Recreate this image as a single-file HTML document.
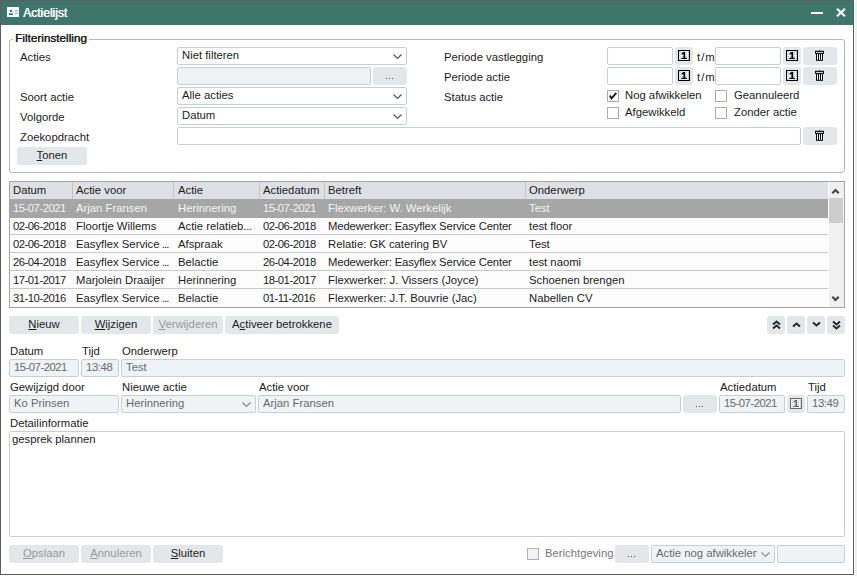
<!DOCTYPE html>
<html><head><meta charset="utf-8">
<style>
*{margin:0;padding:0;box-sizing:border-box}
html,body{width:857px;height:576px;overflow:hidden;background:#eef1f3;font-family:"Liberation Sans",sans-serif;font-size:11.3px;color:#1c1c1c}
#win{position:absolute;left:0;top:0;width:854px;height:575px;background:#fff;border:1px solid #5e5e5e}
.a{position:absolute}
.t{position:absolute;line-height:14px;white-space:nowrap}
.fld{position:absolute;border:1px solid #c7cfd6;border-radius:2px;background:#fff}
.dis{background:#eff3f6}
.btn{border-radius:3px;background:#e3e7ea}
.cb{position:absolute;border:1px solid #adadad;background:#fff}
.u{text-decoration:underline;text-underline-offset:1px}
.dt{letter-spacing:-0.5px}
</style></head><body>
<div id="win"></div>
<div class="a" style="left:854px;top:0;width:1px;height:576px;background:#fff"></div>
<div class="a" style="left:0;top:575px;width:855px;height:1px;background:#fff"></div>

<div class="a" style="left:1px;top:1px;width:852px;height:24px;background:#3e766e"></div>
<svg class="a" style="left:7px;top:7px" width="12" height="10" viewBox="0 0 12 10">
<rect x="0" y="0" width="12" height="10" rx="0.5" fill="#fff"/>
<circle cx="4" cy="4" r="1.3" fill="#3e766e"/>
<rect x="2" y="6.3" width="4" height="1.8" fill="#3e766e"/>
<rect x="8" y="3" width="3" height="1" fill="#9fbab6"/>
<rect x="8" y="4.5" width="3" height="1" fill="#c8d8d5"/>
<rect x="8" y="6" width="3" height="1" fill="#9fbab6"/>
</svg>
<div class="t" style="left:23px;top:6px;color:#fff;font-size:12px;letter-spacing:0px;text-shadow:0.5px 0 0 #fff">Actielijst</div>
<div class="a" style="left:811px;top:12px;width:12px;height:2px;background:#fff"></div>
<svg class="a" style="left:836px;top:8px" width="10" height="9" viewBox="0 0 10 9"><path d="M1 0.8 L9 8.2 M9 0.8 L1 8.2" stroke="#fff" stroke-width="2.2"/></svg>
<div class="a" style="left:9px;top:39px;width:836px;height:134px;border:1px solid #b9b9b9;border-radius:3px"></div>
<div class="t" style="left:13px;top:31px;padding:0 2px;background:#fff;font-size:11.6px;letter-spacing:0.05px;text-shadow:0.45px 0 0 #1c1c1c">Filterinstelling</div>
<div class="t " style="left:20px;top:50px;">Acties</div>
<div class="t " style="left:20px;top:90px;">Soort actie</div>
<div class="t " style="left:20px;top:110px;">Volgorde</div>
<div class="t " style="left:20px;top:130px;">Zoekopdracht</div>
<div class="fld" style="left:177px;top:47px;width:230px;height:18px;"></div>
<div class="t " style="left:182px;top:48px;color:#1c1c1c">Niet filteren</div>
<svg class="a" style="left:393px;top:54px" width="9" height="6" viewBox="0 0 9 6"><path d="M0.5 0.5 L4.5 4.5 L8.5 0.5" fill="none" stroke="#555" stroke-width="1.2"/></svg>
<div class="fld dis" style="left:177px;top:67px;width:194px;height:18px;"></div>
<div class="btn a" style="left:373px;top:67px;width:34px;height:18px;"></div>
<div class="a" style="left:386px;top:78px;width:1px;height:1px;background:#555;box-shadow:0 0 0.3px #555"></div>
<div class="a" style="left:389px;top:78px;width:1px;height:1px;background:#555;box-shadow:0 0 0.3px #555"></div>
<div class="a" style="left:392px;top:78px;width:1px;height:1px;background:#555;box-shadow:0 0 0.3px #555"></div>
<div class="fld" style="left:177px;top:87px;width:230px;height:18px;"></div>
<div class="t " style="left:182px;top:88px;color:#1c1c1c">Alle acties</div>
<svg class="a" style="left:393px;top:94px" width="9" height="6" viewBox="0 0 9 6"><path d="M0.5 0.5 L4.5 4.5 L8.5 0.5" fill="none" stroke="#555" stroke-width="1.2"/></svg>
<div class="fld" style="left:177px;top:107px;width:230px;height:18px;"></div>
<div class="t " style="left:182px;top:108px;color:#1c1c1c">Datum</div>
<svg class="a" style="left:393px;top:114px" width="9" height="6" viewBox="0 0 9 6"><path d="M0.5 0.5 L4.5 4.5 L8.5 0.5" fill="none" stroke="#555" stroke-width="1.2"/></svg>
<div class="fld" style="left:177px;top:127px;width:624px;height:18px;"></div>
<div class="btn a" style="left:803px;top:127px;width:34px;height:18px;"></div>
<svg class="a" style="left:815px;top:130px" width="9" height="11" viewBox="0 0 9 11">
<path d="M3.8 1 L4.5 0 L5.2 1 Z" fill="#000"/>
<rect x="0" y="0.8" width="9" height="3" fill="#000"/>
<rect x="1" y="1.9" width="7" height="0.9" fill="#fff"/>
<rect x="1" y="3.5" width="7" height="7.3" fill="#000"/>
<rect x="2" y="4.2" width="1" height="5.6" fill="#fff"/>
<rect x="4" y="4.2" width="1" height="5.6" fill="#fff"/>
<rect x="6" y="4.2" width="1" height="5.6" fill="#fff"/>
</svg>
<div class="btn a" style="left:17px;top:147px;width:70px;height:18px;"></div>
<div class="t" style="left:17px;width:70px;text-align:center;top:148px;color:#1c1c1c"><span class="u">T</span>onen</div>
<div class="t " style="left:444px;top:50px;">Periode vastlegging</div>
<div class="t " style="left:444px;top:70px;">Periode actie</div>
<div class="t " style="left:444px;top:90px;">Status actie</div>
<div class="fld" style="left:607px;top:47px;width:66px;height:18px;"></div>
<div class="btn a" style="left:675px;top:47px;width:18px;height:18px;"></div>
<svg class="a" style="left:678px;top:50px" width="12" height="11" viewBox="0 0 12 11">
<defs><pattern id="pp1" width="2" height="2" patternUnits="userSpaceOnUse"><rect width="2" height="2" fill="#fff"/><rect width="1" height="1" fill="#c0c0c0"/></pattern></defs>
<rect x="0.5" y="0.5" width="11" height="10" fill="url(#pp1)" stroke="#000" stroke-width="1.2"/>
<path d="M3.4 3.4 L5.5 2 H7.2 V7.7 H8.9 V9 H3.3 V7.7 H5.4 V3.9 L3.4 4.5 Z" fill="#000"/>
</svg>
<div class="t " style="left:697px;top:50px;letter-spacing:1px">t/m</div>
<div class="fld" style="left:715px;top:47px;width:66px;height:18px;"></div>
<div class="btn a" style="left:783px;top:47px;width:18px;height:18px;"></div>
<svg class="a" style="left:786px;top:50px" width="12" height="11" viewBox="0 0 12 11">
<defs><pattern id="pp2" width="2" height="2" patternUnits="userSpaceOnUse"><rect width="2" height="2" fill="#fff"/><rect width="1" height="1" fill="#c0c0c0"/></pattern></defs>
<rect x="0.5" y="0.5" width="11" height="10" fill="url(#pp2)" stroke="#000" stroke-width="1.2"/>
<path d="M3.4 3.4 L5.5 2 H7.2 V7.7 H8.9 V9 H3.3 V7.7 H5.4 V3.9 L3.4 4.5 Z" fill="#000"/>
</svg>
<div class="btn a" style="left:803px;top:47px;width:34px;height:18px;"></div>
<svg class="a" style="left:815px;top:50px" width="9" height="11" viewBox="0 0 9 11">
<path d="M3.8 1 L4.5 0 L5.2 1 Z" fill="#000"/>
<rect x="0" y="0.8" width="9" height="3" fill="#000"/>
<rect x="1" y="1.9" width="7" height="0.9" fill="#fff"/>
<rect x="1" y="3.5" width="7" height="7.3" fill="#000"/>
<rect x="2" y="4.2" width="1" height="5.6" fill="#fff"/>
<rect x="4" y="4.2" width="1" height="5.6" fill="#fff"/>
<rect x="6" y="4.2" width="1" height="5.6" fill="#fff"/>
</svg>
<div class="fld" style="left:607px;top:67px;width:66px;height:18px;"></div>
<div class="btn a" style="left:675px;top:67px;width:18px;height:18px;"></div>
<svg class="a" style="left:678px;top:70px" width="12" height="11" viewBox="0 0 12 11">
<defs><pattern id="pp3" width="2" height="2" patternUnits="userSpaceOnUse"><rect width="2" height="2" fill="#fff"/><rect width="1" height="1" fill="#c0c0c0"/></pattern></defs>
<rect x="0.5" y="0.5" width="11" height="10" fill="url(#pp3)" stroke="#000" stroke-width="1.2"/>
<path d="M3.4 3.4 L5.5 2 H7.2 V7.7 H8.9 V9 H3.3 V7.7 H5.4 V3.9 L3.4 4.5 Z" fill="#000"/>
</svg>
<div class="t " style="left:697px;top:70px;letter-spacing:1px">t/m</div>
<div class="fld" style="left:715px;top:67px;width:66px;height:18px;"></div>
<div class="btn a" style="left:783px;top:67px;width:18px;height:18px;"></div>
<svg class="a" style="left:786px;top:70px" width="12" height="11" viewBox="0 0 12 11">
<defs><pattern id="pp4" width="2" height="2" patternUnits="userSpaceOnUse"><rect width="2" height="2" fill="#fff"/><rect width="1" height="1" fill="#c0c0c0"/></pattern></defs>
<rect x="0.5" y="0.5" width="11" height="10" fill="url(#pp4)" stroke="#000" stroke-width="1.2"/>
<path d="M3.4 3.4 L5.5 2 H7.2 V7.7 H8.9 V9 H3.3 V7.7 H5.4 V3.9 L3.4 4.5 Z" fill="#000"/>
</svg>
<div class="btn a" style="left:803px;top:67px;width:34px;height:18px;"></div>
<svg class="a" style="left:815px;top:70px" width="9" height="11" viewBox="0 0 9 11">
<path d="M3.8 1 L4.5 0 L5.2 1 Z" fill="#000"/>
<rect x="0" y="0.8" width="9" height="3" fill="#000"/>
<rect x="1" y="1.9" width="7" height="0.9" fill="#fff"/>
<rect x="1" y="3.5" width="7" height="7.3" fill="#000"/>
<rect x="2" y="4.2" width="1" height="5.6" fill="#fff"/>
<rect x="4" y="4.2" width="1" height="5.6" fill="#fff"/>
<rect x="6" y="4.2" width="1" height="5.6" fill="#fff"/>
</svg>
<div class="cb" style="left:607px;top:90px;width:12px;height:12px;"></div>
<svg class="a" style="left:607px;top:90px" width="12" height="12" viewBox="0 0 12 12"><path d="M2.8 5.6 L4.5 8.4 L9.3 2.9" fill="none" stroke="#1a1a1a" stroke-width="1.9"/></svg>
<div class="t " style="left:625px;top:88px;">Nog afwikkelen</div>
<div class="cb" style="left:715px;top:90px;width:12px;height:12px;"></div>
<div class="t " style="left:734px;top:88px;">Geannuleerd</div>
<div class="cb" style="left:607px;top:107px;width:12px;height:12px;"></div>
<div class="t " style="left:625px;top:105px;">Afgewikkeld</div>
<div class="cb" style="left:715px;top:107px;width:12px;height:12px;"></div>
<div class="t " style="left:734px;top:105px;">Zonder actie</div>
<div class="a" style="left:9px;top:181px;width:836px;height:127px;border:1px solid #a5a5a5;background:#fcfcfc"></div>
<div class="a" style="left:10px;top:182px;width:818px;height:17px;background:#dfe0e4"></div>
<div class="a" style="left:72px;top:182px;width:1px;height:17px;background:#c4c4c8"></div>
<div class="a" style="left:173px;top:182px;width:1px;height:17px;background:#c4c4c8"></div>
<div class="a" style="left:259px;top:182px;width:1px;height:17px;background:#c4c4c8"></div>
<div class="a" style="left:324px;top:182px;width:1px;height:17px;background:#c4c4c8"></div>
<div class="a" style="left:525px;top:182px;width:1px;height:17px;background:#c4c4c8"></div>
<div class="t " style="left:13px;top:183px;">Datum</div>
<div class="t " style="left:76px;top:183px;">Actie voor</div>
<div class="t " style="left:178px;top:183px;">Actie</div>
<div class="t " style="left:263px;top:183px;">Actiedatum</div>
<div class="t " style="left:328px;top:183px;">Betreft</div>
<div class="t " style="left:529px;top:183px;">Onderwerp</div>
<div class="a" style="left:10px;top:199px;width:818px;height:19px;background:#a6a6a6"></div>
<div class="t dt" style="left:13px;top:201px;color:#f4f4f4">15-07-2021</div>
<div class="t " style="left:76px;top:201px;color:#f4f4f4">Arjan Fransen</div>
<div class="t " style="left:178px;top:201px;color:#f4f4f4">Herinnering</div>
<div class="t dt" style="left:263px;top:201px;color:#f4f4f4">15-07-2021</div>
<div class="t " style="left:328px;top:201px;color:#f4f4f4">Flexwerker: W. Werkelijk</div>
<div class="t " style="left:529px;top:201px;color:#f4f4f4">Test</div>
<div class="t dt" style="left:13px;top:219px;color:#1c1c1c">02-06-2018</div>
<div class="t " style="left:76px;top:219px;color:#1c1c1c">Floortje Willems</div>
<div class="t " style="left:178px;top:219px;color:#1c1c1c">Actie relatieb<span style="letter-spacing:-0.3px">...</span></div>
<div class="t dt" style="left:263px;top:219px;color:#1c1c1c">02-06-2018</div>
<div class="t " style="left:328px;top:219px;color:#1c1c1c;letter-spacing:-0.15px">Medewerker: Easyflex Service Center</div>
<div class="t " style="left:529px;top:219px;color:#1c1c1c">test floor</div>
<div class="a" style="left:10px;top:234px;width:818px;height:1px;background:#c9c9c9"></div>
<div class="t dt" style="left:13px;top:237px;color:#1c1c1c">02-06-2018</div>
<div class="t " style="left:76px;top:237px;color:#1c1c1c">Easyflex Service<span style="letter-spacing:-0.9px"> ...</span></div>
<div class="t " style="left:178px;top:237px;color:#1c1c1c">Afspraak</div>
<div class="t dt" style="left:263px;top:237px;color:#1c1c1c">02-06-2018</div>
<div class="t " style="left:328px;top:237px;color:#1c1c1c">Relatie: GK catering BV</div>
<div class="t " style="left:529px;top:237px;color:#1c1c1c">Test</div>
<div class="a" style="left:10px;top:252px;width:818px;height:1px;background:#c9c9c9"></div>
<div class="t dt" style="left:13px;top:255px;color:#1c1c1c">26-04-2018</div>
<div class="t " style="left:76px;top:255px;color:#1c1c1c">Easyflex Service<span style="letter-spacing:-0.9px"> ...</span></div>
<div class="t " style="left:178px;top:255px;color:#1c1c1c">Belactie</div>
<div class="t dt" style="left:263px;top:255px;color:#1c1c1c">26-04-2018</div>
<div class="t " style="left:328px;top:255px;color:#1c1c1c;letter-spacing:-0.15px">Medewerker: Easyflex Service Center</div>
<div class="t " style="left:529px;top:255px;color:#1c1c1c">test naomi</div>
<div class="a" style="left:10px;top:270px;width:818px;height:1px;background:#c9c9c9"></div>
<div class="t dt" style="left:13px;top:273px;color:#1c1c1c">17-01-2017</div>
<div class="t " style="left:76px;top:273px;color:#1c1c1c">Marjolein Draaijer</div>
<div class="t " style="left:178px;top:273px;color:#1c1c1c">Herinnering</div>
<div class="t dt" style="left:263px;top:273px;color:#1c1c1c">18-01-2017</div>
<div class="t " style="left:328px;top:273px;color:#1c1c1c">Flexwerker: J. Vissers (Joyce)</div>
<div class="t " style="left:529px;top:273px;color:#1c1c1c">Schoenen brengen</div>
<div class="a" style="left:10px;top:288px;width:818px;height:1px;background:#c9c9c9"></div>
<div class="t dt" style="left:13px;top:291px;color:#1c1c1c">31-10-2016</div>
<div class="t " style="left:76px;top:291px;color:#1c1c1c">Easyflex Service<span style="letter-spacing:-0.9px"> ...</span></div>
<div class="t " style="left:178px;top:291px;color:#1c1c1c">Belactie</div>
<div class="t dt" style="left:263px;top:291px;color:#1c1c1c">01-11-2016</div>
<div class="t " style="left:328px;top:291px;color:#1c1c1c">Flexwerker: J.T. Bouvrie (Jac)</div>
<div class="t " style="left:529px;top:291px;color:#1c1c1c">Nabellen CV</div>
<div class="a" style="left:829px;top:182px;width:15px;height:125px;background:#f0f0f0"></div>
<div class="a" style="left:829px;top:198px;width:14px;height:25px;background:#cdcdcd"></div>
<svg class="a" style="left:831px;top:187px" width="9" height="8" viewBox="0 0 9 8"><path d="M1.3 6.3 L4.5 3 L7.7 6.3" fill="none" stroke="#444" stroke-width="2"/></svg>
<svg class="a" style="left:831px;top:295px" width="9" height="8" viewBox="0 0 9 8"><path d="M1.3 1.7 L4.5 5 L7.7 1.7" fill="none" stroke="#444" stroke-width="2"/></svg>
<div class="btn a" style="left:9px;top:316px;width:70px;height:18px;"></div>
<div class="t" style="left:9px;width:70px;text-align:center;top:317px;color:#1c1c1c"><span class="u">N</span>ieuw</div>
<div class="btn a" style="left:81px;top:316px;width:70px;height:18px;"></div>
<div class="t" style="left:81px;width:70px;text-align:center;top:317px;color:#1c1c1c"><span class="u">W</span>ijzigen</div>
<div class="btn a" style="left:153px;top:316px;width:70px;height:18px;"></div>
<div class="t" style="left:153px;width:70px;text-align:center;top:317px;color:#9a9a9a"><span class="u">V</span>erwijderen</div>
<div class="btn a" style="left:225px;top:316px;width:114px;height:18px;"></div>
<div class="t" style="left:225px;width:114px;text-align:center;top:317px;color:#1c1c1c">A<span class="u">c</span>tiveer betrokkene</div>
<div class="btn a" style="left:767px;top:316px;width:18px;height:18px;"></div>
<svg class="a" style="left:772px;top:320px" width="9" height="10" viewBox="0 0 9 10"><path d="M1 4.5 L4.5 1.5 L8 4.5 M1 8.5 L4.5 5.5 L8 8.5" fill="none" stroke="#1f2a33" stroke-width="2"/></svg>
<div class="btn a" style="left:787px;top:316px;width:18px;height:18px;"></div>
<svg class="a" style="left:792px;top:320px" width="9" height="10" viewBox="0 0 9 10"><path d="M1 6.5 L4.5 3.5 L8 6.5" fill="none" stroke="#1f2a33" stroke-width="2"/></svg>
<div class="btn a" style="left:807px;top:316px;width:18px;height:18px;"></div>
<svg class="a" style="left:812px;top:320px" width="9" height="10" viewBox="0 0 9 10"><path d="M1 2.5 L4.5 5.5 L8 2.5" fill="none" stroke="#1f2a33" stroke-width="2"/></svg>
<div class="btn a" style="left:827px;top:316px;width:18px;height:18px;"></div>
<svg class="a" style="left:832px;top:320px" width="9" height="10" viewBox="0 0 9 10"><path d="M1 1.5 L4.5 4.5 L8 1.5 M1 5.5 L4.5 8.5 L8 5.5" fill="none" stroke="#1f2a33" stroke-width="2"/></svg>
<div class="t " style="left:10px;top:344px;">Datum</div>
<div class="t " style="left:82px;top:344px;">Tijd</div>
<div class="t " style="left:122px;top:344px;">Onderwerp</div>
<div class="fld dis" style="left:9px;top:359px;width:70px;height:18px;"></div>
<div class="t " style="left:14px;top:360px;color:#6a6a6a"><span class="dt">15-07-2021</span></div>
<div class="fld dis" style="left:81px;top:359px;width:38px;height:18px;"></div>
<div class="t " style="left:86px;top:360px;color:#6a6a6a"><span style="letter-spacing:-0.4px">13:48</span></div>
<div class="fld dis" style="left:121px;top:359px;width:724px;height:18px;"></div>
<div class="t " style="left:126px;top:360px;color:#6a6a6a">Test</div>
<div class="t " style="left:10px;top:380px;">Gewijzigd door</div>
<div class="t " style="left:122px;top:380px;">Nieuwe actie</div>
<div class="t " style="left:259px;top:380px;">Actie voor</div>
<div class="t " style="left:720px;top:380px;">Actiedatum</div>
<div class="t " style="left:808px;top:380px;">Tijd</div>
<div class="fld dis" style="left:9px;top:395px;width:110px;height:18px;"></div>
<div class="t " style="left:14px;top:396px;color:#6a6a6a">Ko Prinsen</div>
<div class="fld dis" style="left:121px;top:395px;width:135px;height:18px;"></div>
<div class="t " style="left:126px;top:396px;color:#6a6a6a">Herinnering</div>
<svg class="a" style="left:242px;top:402px" width="9" height="6" viewBox="0 0 9 6"><path d="M0.5 0.5 L4.5 4.5 L8.5 0.5" fill="none" stroke="#8a8a8a" stroke-width="1.2"/></svg>
<div class="fld dis" style="left:258px;top:395px;width:423px;height:18px;"></div>
<div class="t " style="left:263px;top:396px;color:#6a6a6a">Arjan Fransen</div>
<div class="btn a" style="left:683px;top:395px;width:34px;height:18px;"></div>
<div class="a" style="left:696px;top:406px;width:1px;height:1px;background:#555;box-shadow:0 0 0.3px #555"></div>
<div class="a" style="left:699px;top:406px;width:1px;height:1px;background:#555;box-shadow:0 0 0.3px #555"></div>
<div class="a" style="left:702px;top:406px;width:1px;height:1px;background:#555;box-shadow:0 0 0.3px #555"></div>
<div class="fld dis" style="left:719px;top:395px;width:66px;height:18px;"></div>
<div class="t " style="left:724px;top:396px;color:#6a6a6a"><span class="dt">15-07-2021</span></div>
<div class="btn a" style="left:787px;top:395px;width:18px;height:18px;"></div>
<svg class="a" style="left:790px;top:398px" width="12" height="11" viewBox="0 0 12 11">
<defs><pattern id="pp5" width="2" height="2" patternUnits="userSpaceOnUse"><rect width="2" height="2" fill="#fff"/><rect width="1" height="1" fill="#cccccc"/></pattern></defs>
<rect x="0.5" y="0.5" width="11" height="10" fill="url(#pp5)" stroke="#6b6b6b" stroke-width="1.2"/>
<path d="M3.4 3.4 L5.5 2 H7.2 V7.7 H8.9 V9 H3.3 V7.7 H5.4 V3.9 L3.4 4.5 Z" fill="#6b6b6b"/>
</svg>
<div class="fld dis" style="left:807px;top:395px;width:38px;height:18px;"></div>
<div class="t " style="left:812px;top:396px;color:#6a6a6a"><span style="letter-spacing:-0.4px">13:49</span></div>
<div class="t " style="left:10px;top:416px;">Detailinformatie</div>
<div class="fld" style="left:9px;top:431px;width:836px;height:106px;"></div>
<div class="t " style="left:12px;top:432px;">gesprek plannen</div>
<div class="btn a" style="left:9px;top:545px;width:70px;height:18px;"></div>
<div class="t" style="left:9px;width:70px;text-align:center;top:546px;color:#9a9a9a"><span class="u">O</span>pslaan</div>
<div class="btn a" style="left:81px;top:545px;width:70px;height:18px;"></div>
<div class="t" style="left:81px;width:70px;text-align:center;top:546px;color:#9a9a9a"><span class="u">A</span>nnuleren</div>
<div class="btn a" style="left:153px;top:545px;width:70px;height:18px;"></div>
<div class="t" style="left:153px;width:70px;text-align:center;top:546px;color:#1c1c1c"><span class="u">S</span>luiten</div>
<div class="cb" style="left:527px;top:548px;width:12px;height:12px;background:#eff3f6;border-color:#a9b0b6"></div>
<div class="t " style="left:545px;top:546px;color:#777">Berichtgeving</div>
<div class="btn a" style="left:615px;top:545px;width:34px;height:18px;"></div>
<div class="a" style="left:628px;top:556px;width:1px;height:1px;background:#555;box-shadow:0 0 0.3px #555"></div>
<div class="a" style="left:631px;top:556px;width:1px;height:1px;background:#555;box-shadow:0 0 0.3px #555"></div>
<div class="a" style="left:634px;top:556px;width:1px;height:1px;background:#555;box-shadow:0 0 0.3px #555"></div>
<div class="fld dis" style="left:651px;top:545px;width:124px;height:18px;"></div>
<div class="a" style="left:652px;top:546px;width:105px;height:16px;overflow:hidden"><div class="t" style="left:4px;top:0px;color:#6a6a6a">Actie nog afwikkelen</div></div>
<svg class="a" style="left:761px;top:552px" width="9" height="6" viewBox="0 0 9 6"><path d="M0.5 0.5 L4.5 4.5 L8.5 0.5" fill="none" stroke="#8a8a8a" stroke-width="1.2"/></svg>
<div class="fld dis" style="left:777px;top:545px;width:68px;height:18px;"></div>
</body></html>
